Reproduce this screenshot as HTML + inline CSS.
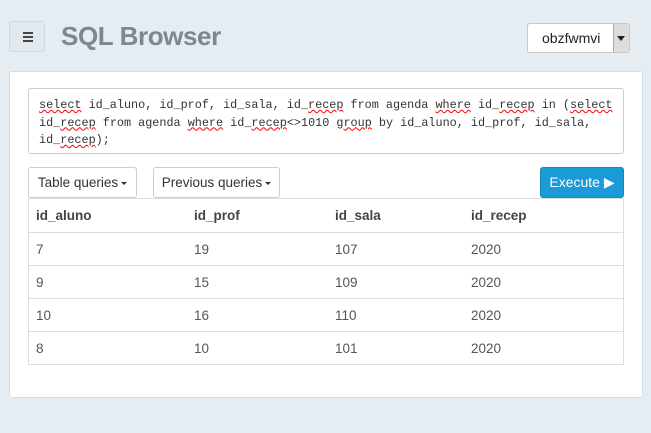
<!DOCTYPE html>
<html><head><style>
body{margin:0;width:651px;height:433px;background:#e6edf2;font-family:"Liberation Sans",sans-serif;position:relative;overflow:hidden}
.abs{position:absolute;box-sizing:border-box}
.menu{left:9px;top:21px;width:36px;height:31px;background:#e1e8ee;border:1px solid #cfd8e0;border-radius:3px}
.menu i{position:absolute;left:13px;width:10px;height:2px;background:#444}
.title{left:61px;top:21px;font-size:26px;font-weight:bold;color:#7d8791;letter-spacing:-0.4px}
.sel{left:527px;top:23px;width:103px;height:30px;background:#fff;border:1px solid #c8c8c8;border-radius:3px;font-size:14px;color:#222}
.panel{left:9px;top:71px;width:634px;height:327px;background:#fff;border:1px solid #d5dde5;border-radius:3px}
.ta{left:28px;top:88px;width:596px;height:66px;border:1px solid #ccc;border-radius:3px;font-family:"Liberation Mono",monospace;font-size:11.8px;line-height:17.5px;color:#333;padding:8px 2px 8px 10px;white-space:pre;overflow:hidden}
.u{text-decoration:underline wavy red;text-decoration-thickness:1px}
.btn{top:167px;height:31px;border:1px solid #ccc;border-radius:3px;background:#fff;font-size:13.5px;color:#333;line-height:29px;text-align:center}
.exe{left:540px;top:167px;width:84px;height:31px;background:#1a9ad6;border:1px solid #1488c0;border-radius:3px;color:#fff;font-size:14px;line-height:29px;text-align:center}
table{position:absolute;left:28px;top:198px;width:596px;border-collapse:collapse;font-size:13.5px;color:#555;border:1px solid #ddd}
td,th{height:32px;border-top:1px solid #ddd;text-align:left;padding:0 0 0 7px}
th{height:33px;font-weight:bold;color:#444}
.car{display:inline-block;border-left:3px solid transparent;border-right:3px solid transparent;border-top:3px solid #333;vertical-align:middle;margin-left:3px}
</style></head><body>
<div class="abs menu"><i style="top:10px"></i><i style="top:14px"></i><i style="top:18px"></i></div>
<div class="abs title">SQL Browser</div>
<div class="abs sel"><span style="position:absolute;left:14px;top:6px">obzfwmvi</span><div style="position:absolute;right:0;top:0;width:15px;height:28px;background:#ddd;border-left:1px solid #aaa"><span style="position:absolute;left:3px;top:12px;border-left:4px solid transparent;border-right:4px solid transparent;border-top:5px solid #222"></span></div></div>
<div class="abs panel"></div>
<div class="abs ta"><span class="u">select</span> id_aluno, id_prof, id_sala, id_<span class="u">recep</span> from agenda <span class="u">where</span> id_<span class="u">recep</span> in (<span class="u">select</span>
id_<span class="u">recep</span> from agenda <span class="u">where</span> id_<span class="u">recep</span>&lt;&gt;1010 <span class="u">group</span> by id_aluno, id_prof, id_sala,
id_<span class="u">recep</span>);</div>
<div class="abs btn" style="left:28px;width:109px">Table queries<span class="car"></span></div>
<div class="abs btn" style="left:153px;width:127px">Previous queries<span class="car"></span></div>
<div class="abs exe">Execute &#9654;</div>
<table>
<tr><th style="width:151px;border-top:none">id_aluno</th><th style="width:134px;border-top:none">id_prof</th><th style="width:129px;border-top:none">id_sala</th><th style="border-top:none">id_recep</th></tr>
<tr><td>7</td><td>19</td><td>107</td><td>2020</td></tr>
<tr><td>9</td><td>15</td><td>109</td><td>2020</td></tr>
<tr><td>10</td><td>16</td><td>110</td><td>2020</td></tr>
<tr><td>8</td><td>10</td><td>101</td><td>2020</td></tr>
</table>
</body></html>
